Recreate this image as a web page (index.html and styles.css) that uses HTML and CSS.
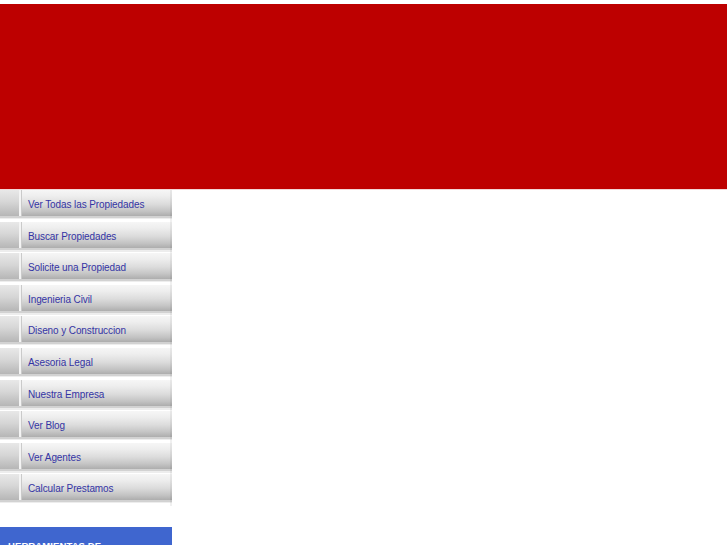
FILE: index.html
```html
<!DOCTYPE html>
<html lang="es">
<head>
<meta charset="utf-8">
<title>Propiedades</title>
<link rel="stylesheet" href="styles.css">
</head>
<body>
<div class="page">
  <header class="banner"></header>
  <aside class="sidebar">
    <nav class="menu">
      <a class="item" href="#"><span class="cap"></span><span class="label">Ver Todas las Propiedades</span></a>
      <a class="item" href="#"><span class="cap"></span><span class="label">Buscar Propiedades</span></a>
      <a class="item" href="#"><span class="cap"></span><span class="label">Solicite una Propiedad</span></a>
      <a class="item" href="#"><span class="cap"></span><span class="label">Ingenieria Civil</span></a>
      <a class="item" href="#"><span class="cap"></span><span class="label">Diseno y Construccion</span></a>
      <a class="item" href="#"><span class="cap"></span><span class="label">Asesoria Legal</span></a>
      <a class="item" href="#"><span class="cap"></span><span class="label">Nuestra Empresa</span></a>
      <a class="item" href="#"><span class="cap"></span><span class="label">Ver Blog</span></a>
      <a class="item" href="#"><span class="cap"></span><span class="label">Ver Agentes</span></a>
      <a class="item" href="#"><span class="cap"></span><span class="label">Calcular Prestamos</span></a>
    </nav>
    <div class="tools">
      <h3 class="tools-title">HERRAMIENTAS DE</h3>
    </div>
  </aside>
</div>
</body>
</html>
```

FILE: styles.css
```css
html, body {
  margin: 0;
  padding: 0;
  background: #ffffff;
}
body {
  font-family: "Liberation Sans", Arial, sans-serif;
}
.page {
  padding-top: 4px;
}
.banner {
  height: 185px;
  background: #bd0000;
  border-bottom: 1px solid #f3d6d6;
}
.sidebar {
  width: 172px;
}
.menu {
  display: flex;
  flex-direction: column;
}
.item {
  display: flex;
  align-items: flex-start;
  height: 31.6px;
  box-sizing: border-box;
  text-decoration: none;
  background:
    linear-gradient(to right, rgba(0,0,0,0) 0, rgba(0,0,0,0) 170px, rgba(0,0,0,0.06) 170px, rgba(0,0,0,0.06) 172px),
    linear-gradient(to bottom,
      #f6f6f6 0px,
      #eeeeee 6px,
      #dcdcdc 14px,
      #c4c4c4 21px,
      #adadad 26px,
      #d2d2d2 26px,
      #d2d2d2 28px,
      #ededed 28px,
      #ededed 29.5px,
      #ffffff 29.5px,
      #ffffff 100%);
}
.cap {
  width: 19px;
  height: 26px;
  flex: none;
  background: linear-gradient(to bottom, #e8e8e8 0, #d6d6d6 12px, #b6b6b6 26px);
  border-right: 2px solid #f4f4f4;
  box-shadow: 1px 0 0 #cacaca;
}
.label {
  padding-left: 7px;
  padding-top: 9px;
  font-size: 10px;
  line-height: 12px;
  color: #3434a4;
  letter-spacing: -0.1px;
  white-space: nowrap;
}
.tools {
  margin-top: 21px;
  height: 40px;
  background: #3f66cf;
  padding: 13px 8px 0;
  box-sizing: border-box;
}
.tools-title {
  margin: 0;
  font-size: 9.5px;
  line-height: 11px;
  font-weight: bold;
  color: #ffffff;
  letter-spacing: 0.1px;
}
```
